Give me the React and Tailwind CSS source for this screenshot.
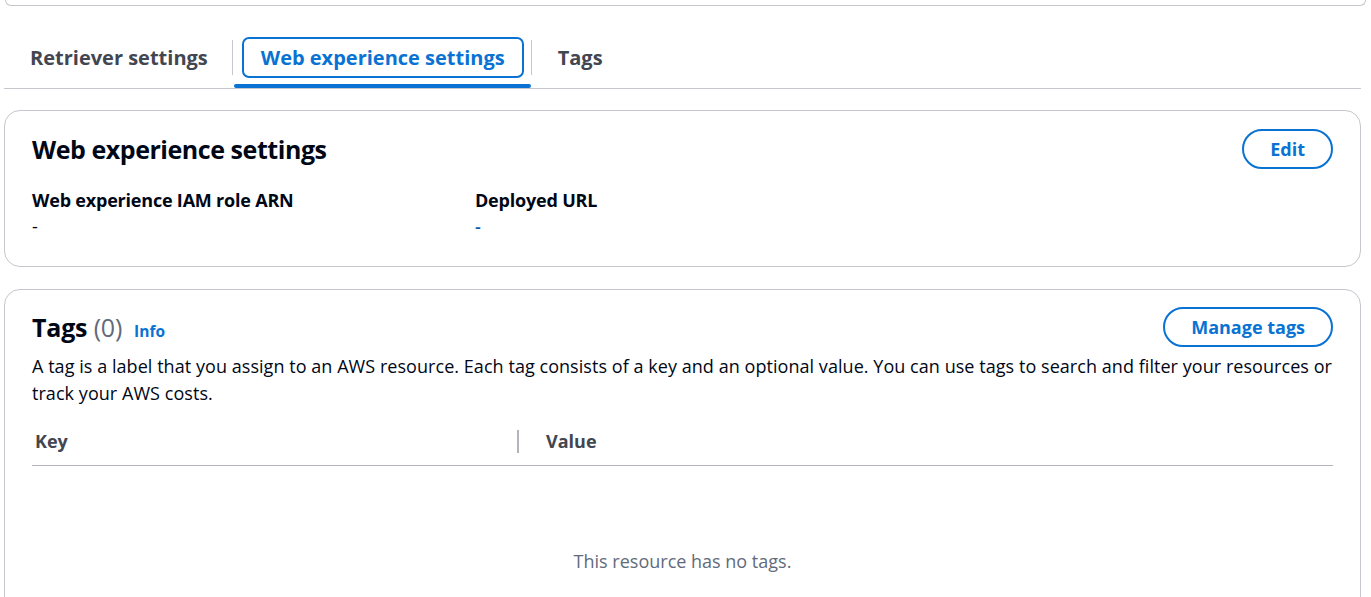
export default function App() {
  const font = "font-['Open_Sans',sans-serif]";
  return (
    <div className={`w-[1371px] h-[597px] overflow-hidden bg-white ${font} text-[#000716]`}>
      {/* top card remnant */}
      <div className="ml-[5px] mr-[5px] h-[6px] border-x border-b border-[#c6c6cd] rounded-b-[16px]" />

      {/* tabs */}
      <div className="ml-[4px] mr-[10px] mt-[31px] flex items-stretch border-b border-[#c6c6cd]">
        <div className="relative flex pl-[8px] pr-[6px] pb-[10px]">
          <div className="pl-[16px] pr-[16px] h-[41px] flex items-center border-2 border-transparent text-[20px] font-bold text-[#424650]">
            Retriever settings
          </div>
        </div>
        <div className="w-px mt-[3px] mb-[13px] bg-[#c6c6cd]" />
        <div className="relative flex pl-[9px] pr-[7px] pb-[10px]">
          <div className="px-[17px] h-[41px] flex items-center border-2 border-[#0972d3] rounded-[7px] text-[20px] font-bold text-[#0972d3]">
            Web experience settings
          </div>
          <div className="absolute left-[1px] right-0 bottom-0 h-[4px] rounded bg-[#0972d3]" />
        </div>
        <div className="w-px mt-[3px] mb-[13px] bg-[#c6c6cd]" />
        <div className="relative flex px-[8px] pb-[10px]">
          <div className="px-[16px] h-[41px] flex items-center border-2 border-transparent text-[20px] font-bold text-[#424650]">
            Tags
          </div>
        </div>
      </div>

      {/* Web experience settings card */}
      <div className="ml-[4px] mr-[10px] mt-[21px] h-[157px] border border-[#c6c6cd] rounded-[16px] px-[27px] pt-[18px]">
        <div className="flex items-center justify-between">
          <h2 className="text-[25px] leading-[30px] font-bold tracking-[-0.45px]">Web experience settings</h2>
          <button className="h-[40px] px-[26px] rounded-full border-2 border-[#0972d3] text-[#0972d3] text-[18px] font-bold">
            Edit
          </button>
        </div>
        <div className="mt-[18px] grid grid-cols-[443px_1fr] text-[18px] leading-[26px]">
          <div>
            <div className="font-bold tracking-[-0.2px]">Web experience IAM role ARN</div>
            <div>-</div>
          </div>
          <div>
            <div className="font-bold tracking-[-0.2px]">Deployed URL</div>
            <div className="text-[#0b5fa8] font-semibold">-</div>
          </div>
        </div>
      </div>

      {/* Tags card */}
      <div className="ml-[4px] mr-[10px] mt-[22px] h-[400px] border border-[#c6c6cd] rounded-[16px] px-[27px] pt-[17px]">
        <div className="flex items-center justify-between">
          <div className="flex items-baseline gap-[12px] pt-[1px]">
            <h2 className="text-[25px] leading-[32px] font-bold tracking-[-0.2px]">
              Tags <span className="font-normal text-[#5f6b7a]">(0)</span>
            </h2>
            <span className="text-[15.5px] font-bold text-[#0972d3]">Info</span>
          </div>
          <button className="h-[40px] px-[26px] rounded-full border-2 border-[#0972d3] text-[#0972d3] text-[18px] font-bold">
            Manage tags
          </button>
        </div>
        <p className="mt-[6px] text-[18px] leading-[27px] tracking-[0.05px]">
          A tag is a label that you assign to an AWS resource. Each tag consists of a key and an optional value. You can use tags to search and filter your resources or track your AWS costs.
        </p>
        <div className="mt-[13px] flex items-center h-[42px] border-b border-[#b4b4bb] text-[18px] font-bold text-[#424650] pb-[3px] box-content">
          <div className="w-[487px] pl-[3px] flex items-center justify-between">
            <span>Key</span>
            <span className="w-[2px] h-[23px] bg-[#b4b4bb]" />
          </div>
          <div className="pl-[27px]">Value</div>
        </div>
        <div className="pt-[82px] text-center text-[18px] leading-[27px] text-[#5f6b7a]">This resource has no tags.</div>
      </div>
    </div>
  );
}
